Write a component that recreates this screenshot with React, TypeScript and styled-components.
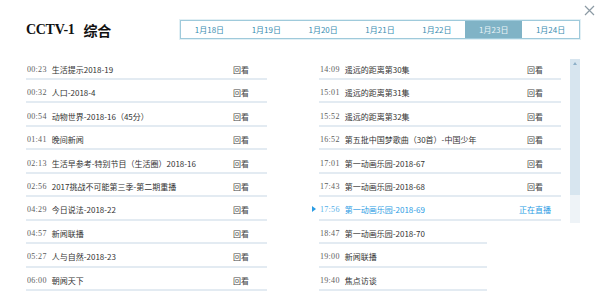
import React from 'react'
import styled, { createGlobalStyle } from 'styled-components'

const GlobalStyle = createGlobalStyle`
  html, body {
    margin: 0;
    padding: 0;
    background: #ffffff;
  }
  body {
    font-family: "Noto Sans CJK SC", "Noto Sans", sans-serif;
  }
`

const StyledPanel = styled.div`
  position: relative;
  width: 600px;
  height: 300px;
  overflow: hidden;
  background: #ffffff;
`

const StyledHeader = styled.div`
  display: flex;
  align-items: center;
  justify-content: space-between;
  padding: 20px 20px 0 26px;
  height: 19px;
`

const StyledTitle = styled.h1`
  display: flex;
  align-items: center;
  gap: 9px;
  margin: 0;
  font-family: "Liberation Serif", "Noto Sans CJK SC", serif;
  font-size: 14px;
  font-weight: bold;
  letter-spacing: -0.3px;
  color: #111;
  white-space: nowrap;
`

const StyledTabs = styled.div`
  display: flex;
  width: 398px;
  height: 17px;
  border: 1px solid #9fcadb;
  box-shadow: 0 0 0 1px #e2f0f5;
`

const StyledTab = styled.div<{ $active?: boolean }>`
  flex: 1;
  display: flex;
  align-items: center;
  justify-content: center;
  font-size: 8px;
  color: ${({ $active }) => ($active ? '#eaf4f8' : '#3a8db1')};
  background: ${({ $active }) => ($active ? '#80b3c6' : 'transparent')};
  cursor: pointer;
`

const StyledClose = styled.button`
  position: absolute;
  top: 5px;
  right: 5px;
  width: 11px;
  height: 11px;
  padding: 0;
  border: none;
  background: none;
  cursor: pointer;
  svg {
    display: block;
  }
`

const StyledBody = styled.div`
  display: flex;
  align-items: flex-start;
  padding-left: 26px;
  margin-top: 17.6px;
`

const StyledColumn = styled.div<{ $width: number; $offset?: number }>`
  width: ${({ $width }) => $width}px;
  margin-left: ${({ $offset }) => $offset || 0}px;
`

const StyledRow = styled.div<{ $short?: boolean; $live?: boolean }>`
  position: relative;
  display: flex;
  align-items: center;
  width: ${({ $short }) => ($short ? '167px' : 'auto')};
  height: 17.44px;
  padding: 4px 0 0 1px;
  border-bottom: 2px solid #e3ebf2;
  color: ${({ $live }) => ($live ? '#2a9ce4' : '#333')};
  white-space: nowrap;
`

const StyledMarker = styled.span`
  position: absolute;
  left: -7px;
  top: 9px;
  width: 0;
  height: 0;
  border-left: 4px solid #2a9ce4;
  border-top: 3.5px solid transparent;
  border-bottom: 3.5px solid transparent;
`

const StyledTime = styled.span`
  font-family: "Liberation Serif", serif;
  font-size: 8px;
  letter-spacing: 0.3px;
  margin-right: 5px;
  opacity: 0.8;
`

const StyledName = styled.span`
  flex: 1;
  font-size: 8px;
`

const StyledLink = styled.span<{ $live?: boolean }>`
  width: 52px;
  text-align: center;
  font-size: 8px;
  color: ${({ $live }) => ($live ? '#2a9ce4' : '#444')};
  cursor: pointer;
`

const StyledScrollbar = styled.div`
  position: relative;
  width: 10px;
  height: 164px;
  margin: 2.4px 0 0 9px;
  background: #eef3f7;
`

const StyledThumb = styled.div`
  height: 136px;
  background: #d7e5ef;
`

const StyledArrow = styled.span`
  position: absolute;
  top: 3px;
  left: 2.5px;
  width: 0;
  height: 0;
  border-bottom: 3px solid #8eb0c8;
  border-left: 2.5px solid transparent;
  border-right: 2.5px solid transparent;
`

type Program = {
  time: string
  name: string
  link?: string
  live?: boolean
}

const tabs = ['1月18日', '1月19日', '1月20日', '1月21日', '1月22日', '1月23日', '1月24日']

const leftList: Program[] = [
  { time: '00:23', name: '生活提示2018-19', link: '回看' },
  { time: '00:32', name: '人口-2018-4', link: '回看' },
  { time: '00:54', name: '动物世界-2018-16（45分）', link: '回看' },
  { time: '01:41', name: '晚间新闻', link: '回看' },
  { time: '02:13', name: '生活早参考-特别节目（生活圈）2018-16', link: '回看' },
  { time: '02:56', name: '2017挑战不可能第三季-第二期重播', link: '回看' },
  { time: '04:29', name: '今日说法-2018-22', link: '回看' },
  { time: '04:57', name: '新闻联播', link: '回看' },
  { time: '05:27', name: '人与自然-2018-23', link: '回看' },
  { time: '06:00', name: '朝闻天下', link: '回看' },
]

const rightList: Program[] = [
  { time: '14:09', name: '遥远的距离第30集', link: '回看' },
  { time: '15:01', name: '遥远的距离第31集', link: '回看' },
  { time: '15:52', name: '遥远的距离第32集', link: '回看' },
  { time: '16:52', name: '第五批中国梦歌曲（30首）-中国少年', link: '回看' },
  { time: '17:01', name: '第一动画乐园-2018-67', link: '回看' },
  { time: '17:43', name: '第一动画乐园-2018-68', link: '回看' },
  { time: '17:56', name: '第一动画乐园-2018-69', link: '正在直播', live: true },
  { time: '18:47', name: '第一动画乐园-2018-70' },
  { time: '19:00', name: '新闻联播' },
  { time: '19:40', name: '焦点访谈' },
]

const ProgramRow = ({ time, name, link, live }: Program) => (
  <StyledRow $short={!link} $live={live}>
    {live && <StyledMarker />}
    <StyledTime>{time}</StyledTime>
    <StyledName>{name}</StyledName>
    {link && <StyledLink $live={live}>{link}</StyledLink>}
  </StyledRow>
)

const App = () => {
  return (
    <StyledPanel>
      <GlobalStyle />
      <StyledHeader>
        <StyledTitle>
          <span>CCTV-1</span>
          <span>综合</span>
        </StyledTitle>
        <StyledTabs>
          {tabs.map(t => (
            <StyledTab key={t} $active={t === '1月23日'}>{t}</StyledTab>
          ))}
        </StyledTabs>
      </StyledHeader>
      <StyledClose aria-label='close'>
        <svg width='11' height='11' viewBox='0 0 11 11'>
          <path d='M1 1 L10 10 M10 1 L1 10' stroke='#8c9aa4' strokeWidth='1.2' fill='none' />
        </svg>
      </StyledClose>
      <StyledBody>
        <StyledColumn $width={241}>
          {leftList.map(p => <ProgramRow key={p.time} {...p} />)}
        </StyledColumn>
        <StyledColumn $width={242} $offset={52}>
          {rightList.map(p => <ProgramRow key={p.time} {...p} />)}
        </StyledColumn>
        <StyledScrollbar>
          <StyledThumb />
          <StyledArrow />
        </StyledScrollbar>
      </StyledBody>
    </StyledPanel>
  )
}

export default App
